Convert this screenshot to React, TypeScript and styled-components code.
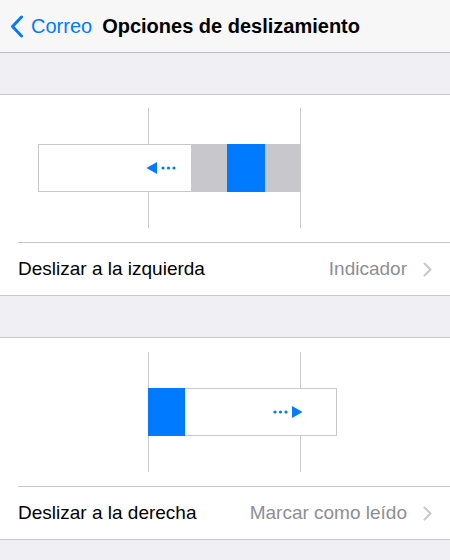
import styled, { createGlobalStyle } from 'styled-components';

const GlobalStyle = createGlobalStyle`
  html, body {
    margin: 0;
    padding: 0;
    background: #efeff4;
  }
  body {
    font-family: "Liberation Sans", Arial, sans-serif;
    -webkit-font-smoothing: antialiased;
  }
`;

const BLUE = '#007aff';
const LINE = '#c8c7cc';

type RowProps = {
  label: string;
  value: string;
};

const Chevron = () => (
  <svg width="9" height="15" viewBox="0 0 9 15">
    <path d="M1.5 1.5 L7.5 7.5 L1.5 13.5" fill="none" stroke="#c7c7cc" strokeWidth="2" strokeLinecap="round" strokeLinejoin="round" />
  </svg>
);

const SettingRow = ({ label, value }: RowProps) => (
  <Row>
    <Label>{label}</Label>
    <Value>{value}</Value>
    <Chevron />
  </Row>
);

const LeftSwipe = () => (
  <svg width="450" height="147" viewBox="0 0 450 147">
    <line x1="148.5" y1="13" x2="148.5" y2="133" stroke={LINE} strokeWidth="1" />
    <line x1="300.5" y1="13" x2="300.5" y2="133" stroke={LINE} strokeWidth="1" />
    <rect x="38.5" y="49.5" width="262" height="47" fill="#fff" stroke={LINE} strokeWidth="1" />
    <rect x="191" y="49" width="36" height="48" fill="#c7c7cc" />
    <rect x="227" y="49" width="38" height="48" fill={BLUE} />
    <rect x="265" y="49" width="36" height="48" fill="#c7c7cc" />
    <polygon points="146.5,73 157,67 157,79" fill={BLUE} />
    <circle cx="163" cy="73" r="1.6" fill={BLUE} />
    <circle cx="168.5" cy="73" r="1.6" fill={BLUE} />
    <circle cx="174" cy="73" r="1.6" fill={BLUE} />
  </svg>
);

const RightSwipe = () => (
  <svg width="450" height="148" viewBox="0 0 450 148">
    <line x1="148.5" y1="14" x2="148.5" y2="134" stroke={LINE} strokeWidth="1" />
    <line x1="300.5" y1="14" x2="300.5" y2="134" stroke={LINE} strokeWidth="1" />
    <rect x="148.5" y="50.5" width="188" height="47" fill="#fff" stroke={LINE} strokeWidth="1" />
    <rect x="148" y="50" width="37" height="48" fill={BLUE} />
    <circle cx="275" cy="74" r="1.6" fill={BLUE} />
    <circle cx="280.5" cy="74" r="1.6" fill={BLUE} />
    <circle cx="286" cy="74" r="1.6" fill={BLUE} />
    <polygon points="292,68 292,80 302.5,74" fill={BLUE} />
  </svg>
);

export default function App() {
  return (
    <Page>
      <GlobalStyle />
      <NavBar>
        <BackButton>
          <svg width="14" height="23" viewBox="0 0 14 23">
            <path d="M11.5 2 L2.5 11.5 L11.5 21" fill="none" stroke={BLUE} strokeWidth="3" strokeLinecap="round" strokeLinejoin="round" />
          </svg>
          <span>Correo</span>
        </BackButton>
        <Title>Opciones de deslizamiento</Title>
      </NavBar>
      <Spacer />
      <Section>
        <Illustration $height={147}>
          <LeftSwipe />
        </Illustration>
        <SettingRow label="Deslizar a la izquierda" value="Indicador" />
      </Section>
      <Spacer />
      <Section>
        <Illustration $height={148}>
          <RightSwipe />
        </Illustration>
        <SettingRow label="Deslizar a la derecha" value="Marcar como leído" />
      </Section>
    </Page>
  );
}

const Page = styled.div`
  width: 450px;
  height: 560px;
  overflow: hidden;
  background: #efeff4;
`;

const NavBar = styled.header`
  height: 52px;
  display: flex;
  align-items: center;
  gap: 10px;
  padding-left: 10px;
  background: #f7f7f7;
  border-bottom: 1px solid #bcbbc1;
`;

const BackButton = styled.div`
  display: flex;
  align-items: center;
  gap: 7px;
  color: ${BLUE};
  font-size: 20px;
`;

const Title = styled.h1`
  margin: 0;
  font-size: 20px;
  font-weight: 700;
  color: #000;
`;

const Spacer = styled.div`
  height: 41px;
`;

const Section = styled.section`
  background: #fff;
  border-top: 1px solid ${LINE};
  border-bottom: 1px solid ${LINE};
`;

const Illustration = styled.div<{ $height: number }>`
  height: ${p => p.$height}px;
  svg {
    display: block;
  }
`;

const Row = styled.div`
  height: 52px;
  margin-left: 18px;
  padding-right: 18px;
  display: flex;
  align-items: center;
  border-top: 1px solid ${LINE};
  font-size: 19px;
`;

const Label = styled.span`
  flex: 1;
  color: #000;
`;

const Value = styled.span`
  color: #8e8e93;
  margin-right: 16px;
`;
